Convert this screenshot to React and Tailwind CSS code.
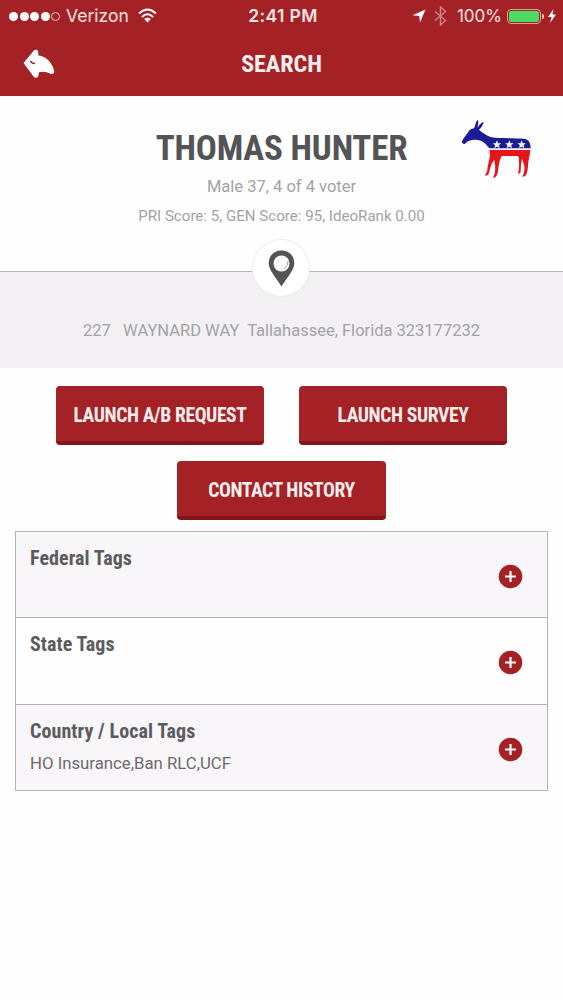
const tags = [
    { title: "Federal Tags", value: "" },
    { title: "State Tags", value: "" },
    { title: "Country / Local Tags", value: "HO Insurance,Ban RLC,UCF" },
];

const condensed = "font-['Roboto_Condensed','Roboto',sans-serif] font-stretch-condensed font-bold whitespace-nowrap";

function StatusBar(){
    return (
        <div className="flex h-8 items-center justify-between pl-[9px] pr-[7px] font-['Inter',sans-serif] text-[17.5px] leading-8 text-[#fbe3e3]">
            <div className="flex w-[200px] items-center">
                <div className="flex gap-[1.5px]">
                    <span className="size-[9px] rounded-full bg-white"></span>
                    <span className="size-[9px] rounded-full bg-white"></span>
                    <span className="size-[9px] rounded-full bg-white"></span>
                    <span className="size-[9px] rounded-full bg-white"></span>
                    <span className="size-[9px] rounded-full border border-[#f0c4c4]"></span>
                </div>
                <span className="ml-[6px]">Verizon</span>
                <svg className="ml-[9px] -mt-0.5" width="19" height="15" viewBox="0 0 19 15" fill="none" stroke="#fff" strokeWidth="2">
                    <path d="M1 5.500 Q9.500 -2.500 18 5.500" />
                    <path d="M4 9 Q9.500 3.500 15 9" />
                    <path d="M9.500 14.500 L6.200 11 Q9.500 8.300 12.800 11 Z" fill="#fff" stroke="none" />
                </svg>
            </div>
            <span className="ml-px font-semibold tracking-[0.4px]">2:41 PM</span>
            <div className="flex w-[200px] items-center justify-end">
                <svg width="14" height="14" viewBox="0 0 14 14" fill="#fff">
                    <path d="M13.500 0.500 L8 13.500 L7.200 7 L0.500 6.200 Z" />
                </svg>
                <svg className="ml-[8px]" width="13" height="20" viewBox="0 0 13 20" fill="none" stroke="#d28083" strokeWidth="1.500">
                    <path d="M1 5.500 L11.500 14.500 L6.500 19 V1 L11.500 5.500 L1 14.500" />
                </svg>
                <span className="ml-[10px] text-[17px]">100%</span>
                <div className="ml-[5px] h-[15px] w-[34px] rounded-[4px] border border-[#d9a38c] p-px">
                    <div className="h-full rounded-[2px] bg-[#4cd964]"></div>
                </div>
                <span className="ml-px h-[5px] w-[2px] rounded-r-full bg-[#f3cfcf]"></span>
                <svg className="ml-[4px]" width="8" height="14" viewBox="0 0 8 14" fill="#fff">
                    <path d="M5.500 0 L0 8 H3.500 L2 14 L8 5.600 H4.500 Z" />
                </svg>
            </div>
        </div>
    )
}

function Donkey(){
    return (
        <svg className="absolute left-[460px] top-[21px]" width="73" height="63" viewBox="60 35 219 189">
            <path fill="#1c1c98" d="M66 108 C72 96 79 88 85 80 C88 74 93 71 102 69 C106 62 106 50 113 43 C117 50 114 58 112 67 C117 61 123 51 131 50 C129 60 123 68 117 73 C127 82 140 91 155 96 C168 99 186 98 205 99 C225 100 248 98 261 103 C269 107 272 117 272 129 H148 C141 120 135 112 124 107 C115 103 106 102 97 104 C88 106 80 109 74 116 C69 117 66 114 66 108 Z" />
            <path fill="#e5151c" d="M148 134 H271 C270 147 267 158 265 170 C263 187 264 204 255 213 L247 214 C252 204 255 194 253 181 C250 174 249 167 247 161 C242 171 243 190 242 201 L234 207 C236 195 238 182 237 170 C237 161 238 156 233 152 H185 C178 164 176 181 174 198 C172 209 169 216 160 219 C160 210 165 207 165 198 C167 184 164 173 163 164 C155 171 151 187 147 203 C144 210 141 211 135 211 C137 204 141 202 142 193 C143 178 149 161 150 149 Z" />
            <g fill="#fff">
                <path d="M171 105 l3.500 8.500 9 .5 -7 5.800 2.400 8.700 -7.900 -4.800 -7.900 4.800 2.400 -8.700 -7 -5.800 9 -.5 Z" />
                <path d="M208 105 l3.500 8.500 9 .5 -7 5.800 2.400 8.700 -7.900 -4.800 -7.900 4.800 2.400 -8.700 -7 -5.800 9 -.5 Z" />
                <path d="M245 105 l3.500 8.500 9 .5 -7 5.800 2.400 8.700 -7.900 -4.800 -7.900 4.800 2.400 -8.700 -7 -5.800 9 -.5 Z" />
            </g>
        </svg>
    )
}

function Button({ children }){
    return (
        <button className={`${condensed} h-[59px] w-[208.500px] rounded-[4px] border-b-4 border-[#85131a] bg-[#a42125] pt-[4px] text-[19.600px] tracking-[-0.380px] text-[#fdeeee]`}>
            {children}
        </button>
    )
}

function TagRow({ tag }){
    return (
        <div className="flex h-[86.600px] items-center justify-between border-b border-[#b3b3b6] pl-[14px] pr-[24px] odd:bg-[#f8f6f9]">
            <div className="h-full pt-[12px]">
                <h2 className={`${condensed} text-[20px] leading-[28px] tracking-[0.080px] text-[#5c5b5d]`}>{tag.title}</h2>
                <p className="mt-[6.500px] text-[16.750px] leading-6 text-[#6b6a6c]">{tag.value}</p>
            </div>
            <svg className="mt-[3.500px]" width="25" height="25" viewBox="0 0 25 25">
                <circle cx="12.500" cy="12.500" r="11.800" fill="#a42125" />
                <path d="M12.500 7 V18 M7 12.500 H18" stroke="#fff" strokeWidth="2.200" />
            </svg>
        </div>
    )
}

export default function App(){
    return (
        <div className="min-h-screen bg-[#fefefe] font-['Roboto',sans-serif]">
            <header className="h-24 bg-[#a42125]">
                <StatusBar />
                <div className="flex h-16 items-center justify-between px-[23px]">
                    <svg width="32" height="30" viewBox="0 0 32 30">
                        <path fill="#fff" stroke="#fff" strokeWidth="1.500" strokeLinejoin="round" d="M1.500 14 L11.500 2 Q14 0.500 14.500 3 V7 C22 7.500 28.500 13.500 30.500 22.500 Q30.500 24.500 28 24.200 C24 22 19.500 21.500 15.500 22.500 L14.500 27 Q13.500 28.500 11.500 27.500 Z" />
                        <path d="M7.500 12 Q8.500 14.500 12 14.500" fill="none" stroke="#a42125" strokeWidth="1.500" />
                    </svg>
                    <h1 className={`${condensed} text-[24px] text-[#fdf0f0]`}>SEARCH</h1>
                    <div className="w-8"></div>
                </div>
            </header>

            <section className="relative h-44 border-b border-[#b5b5b7] text-center text-[#a3a2a5]">
                <h2 className={`${condensed} pt-[33px] text-[35px] leading-[40px] tracking-[-0.2px] text-[#545355]`}>THOMAS HUNTER</h2>
                <p className="mt-[6px] text-[16.500px] leading-6">Male 37, 4 of 4 voter</p>
                <p className="mt-[4.500px] text-[15.100px] leading-6">PRI Score: 5, GEN Score: 95, IdeoRank 0.00</p>
                <Donkey />
                <div className="absolute left-[253px] top-[144px] flex size-[56px] items-center justify-center rounded-full bg-white ring-1 ring-[#ececee]">
                    <svg width="27" height="37" viewBox="0 0 27 37">
                        <path fill="#545355" d="M13.500 0.500 C6 0.500 0.700 6 0.700 13 C0.700 20 7.500 27 13.500 36.500 C19.500 27 26.300 20 26.300 13 C26.300 6 21 0.500 13.500 0.500 Z" />
                        <circle cx="13.500" cy="13.500" r="8" fill="#fff" />
                        <path d="M20 11 Q20 16 16.500 18.500" stroke="#a5a4a6" fill="none" />
                    </svg>
                </div>
            </section>

            <section className="h-24 bg-[#f2f0f3] pt-[47px] text-center text-[16.500px] leading-6 whitespace-pre text-[#a3a2a5]">
                {"227   WAYNARD WAY  Tallahassee, Florida 323177232"}
            </section>

            <div className="flex flex-wrap justify-center gap-x-[34.500px] gap-y-4 pt-[18px]">
                <Button>LAUNCH A/B REQUEST</Button>
                <Button>LAUNCH SURVEY</Button>
                <Button>CONTACT HISTORY</Button>
            </div>

            <div className="mx-[15px] mt-[10.500px] border border-b-0 border-[#b3b3b6]">
                {tags.map((tag) => <TagRow key={tag.title} tag={tag} />)}
            </div>
        </div>
    )
}
